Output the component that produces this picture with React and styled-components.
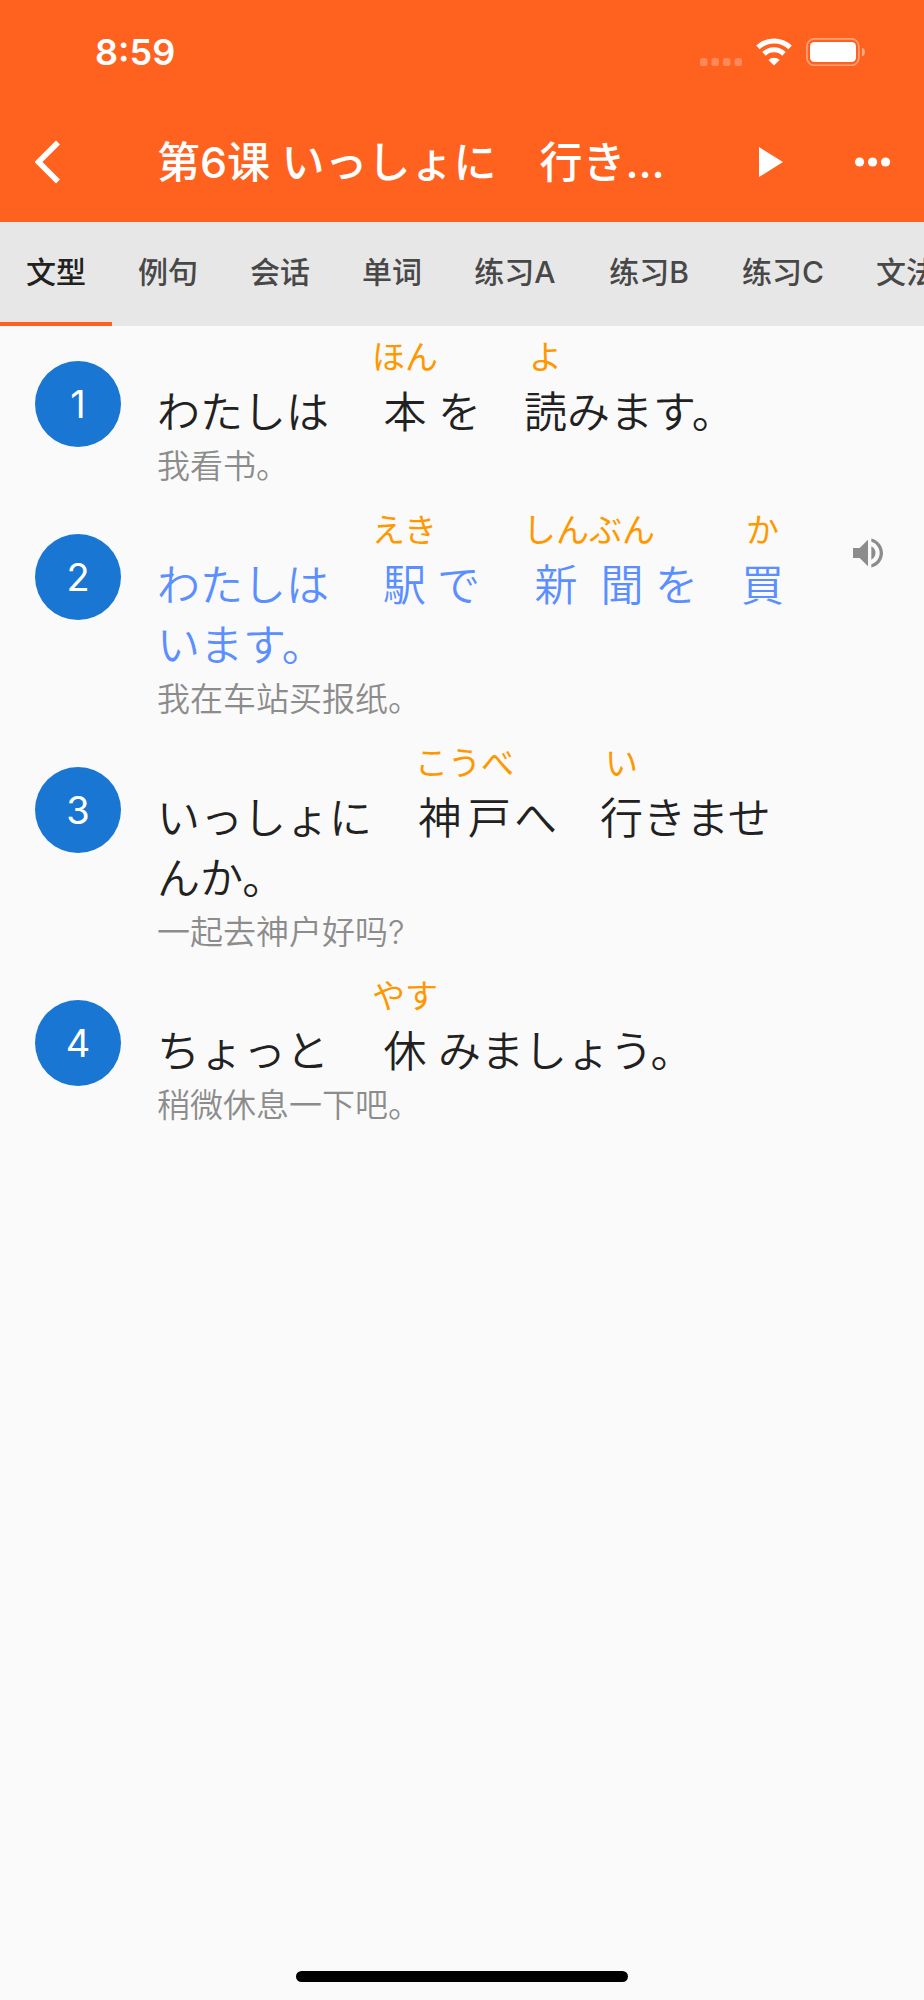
import { useState } from "react";
import styled, { createGlobalStyle } from "styled-components";
import { MdVolumeUp } from "react-icons/md";

const TABS = [
  { name: "文型" },
  { name: "例句" },
  { name: "会话" },
  { name: "单词" },
  { name: "练习A", wide: true },
  { name: "练习B", wide: true },
  { name: "练习C", wide: true },
  { name: "文法" },
];

// A part is plain text or a [kanji, reading] pair
const SENTENCES = [
  {
    id: 1,
    parts: ["わたしは　", ["本", "ほん"], "を　", ["読", "よ"], "みます。"],
    translation: "我看书。",
  },
  {
    id: 2,
    parts: [
      "わたしは　",
      ["駅", "えき"],
      "で　",
      ["新聞", "しんぶん"],
      "を　",
      ["買", "か"],
      "います。",
    ],
    translation: "我在车站买报纸。",
  },
  {
    id: 3,
    parts: [
      "いっしょに　",
      ["神戸", "こうべ"],
      "へ　",
      ["行", "い"],
      "きませんか。",
    ],
    translation: "一起去神户好吗?",
  },
  {
    id: 4,
    parts: ["ちょっと　", ["休", "やす"], "みましょう。"],
    translation: "稍微休息一下吧。",
  },
];

function StatusIcons() {
  return (
    <StatusGroup aria-hidden="true">
      <svg width="42" height="28" viewBox="0 0 42 28">
        <g fill="#fff" opacity="0.25">
          <rect x="0" y="20" width="7.4" height="8" rx="2.6" />
          <rect x="11.5" y="20" width="7.4" height="8" rx="2.6" />
          <rect x="23" y="20" width="7.4" height="8" rx="2.6" />
          <rect x="34.6" y="20" width="7.4" height="8" rx="2.6" />
        </g>
      </svg>
      <svg width="36" height="28" viewBox="0 0 36 28">
        <g fill="none" stroke="#fff" strokeWidth="5">
          <path d="M1.9 9.4a23.2 23.2 0 0 1 32.2 0" />
          <path d="M8 15.9a14.4 14.4 0 0 1 20 0" />
        </g>
        <path fill="#fff" d="M18 27.4l-5.6-5.5a8.2 8.2 0 0 1 11.2 0z" />
      </svg>
      <svg width="60" height="28" viewBox="0 0 60 28">
        <rect
          x="0.9"
          y="0.9"
          width="52"
          height="26.4"
          rx="7.5"
          fill="none"
          stroke="#fff"
          strokeWidth="1.7"
          opacity="0.4"
        />
        <rect x="4" y="4" width="46" height="20" rx="4.5" fill="#fff" />
        <path fill="#fff" opacity="0.45" d="M56 9.8c4 1.6 4 7.2 0 8.8z" />
      </svg>
    </StatusGroup>
  );
}

function Furigana({ kanji, reading }) {
  return (
    <Ruby>
      <Kanji>
        {[...kanji].map((char) => (
          <span key={char}>{char}</span>
        ))}
      </Kanji>
      <Reading>{reading}</Reading>
    </Ruby>
  );
}

function Sentence({ data, active, onSelect }) {
  return (
    <Row>
      <Badge
        type="button"
        aria-label={`第${data.id}句`}
        aria-pressed={active}
        onClick={onSelect}
      >
        {data.id}
      </Badge>
      <Body>
        <Japanese lang="ja" $active={active}>
          {data.parts.map((part, i) =>
            Array.isArray(part) ? (
              <Furigana key={i} kanji={part[0]} reading={part[1]} />
            ) : (
              part
            )
          )}
        </Japanese>
        <Translation>{data.translation}</Translation>
      </Body>
      <Side>
        {active && (
          <SoundButton type="button" aria-label="播放">
            <MdVolumeUp size={40} />
          </SoundButton>
        )}
      </Side>
    </Row>
  );
}

function App() {
  const [tab, setTab] = useState("文型");
  const [selected, setSelected] = useState(2);

  return (
    <Screen lang="zh-CN">
      <GlobalStyle />
      <Header>
        <StatusBar>
          <Clock>8:59</Clock>
          <StatusIcons />
        </StatusBar>
        <NavBar>
          <BackButton type="button" aria-label="返回">
            <svg width="26" height="44" viewBox="0 0 26 44">
              <path
                d="M23 2.5L3.5 22 23 41.5"
                fill="none"
                stroke="#fff"
                strokeWidth="5.6"
              />
            </svg>
          </BackButton>
          <Title>
            第6课 <span lang="ja">いっしょに　行きませんか</span>
          </Title>
          <NavButton type="button" aria-label="播放全部">
            <svg width="24" height="30" viewBox="0 0 24 30">
              <path d="M0 0l24 15L0 30z" fill="#fff" />
            </svg>
          </NavButton>
          <NavButton type="button" aria-label="更多">
            <svg width="36" height="10" viewBox="0 0 36 10">
              <g fill="#fff">
                <circle cx="4.6" cy="5" r="4.6" />
                <circle cx="17.6" cy="5" r="4.6" />
                <circle cx="30.6" cy="5" r="4.6" />
              </g>
            </svg>
          </NavButton>
        </NavBar>
      </Header>

      <TabBar role="tablist">
        {TABS.map(({ name, wide }) => (
          <Tab
            key={name}
            type="button"
            role="tab"
            aria-selected={name === tab}
            $active={name === tab}
            $wide={wide}
            onClick={() => setTab(name)}
          >
            {name}
          </Tab>
        ))}
      </TabBar>

      <List>
        {SENTENCES.map((s) => (
          <Sentence
            key={s.id}
            data={s}
            active={s.id === selected}
            onSelect={() => setSelected(s.id)}
          />
        ))}
      </List>

      <Footer>
        <HomeIndicator />
      </Footer>
    </Screen>
  );
}

const GlobalStyle = createGlobalStyle`
  * {
    box-sizing: border-box;
  }

  body {
    margin: 0;
    background-color: #fafafa;
    font-family: Inter, "Noto Sans CJK SC", sans-serif;
  }

  :lang(ja) {
    font-family: Inter, "Noto Sans CJK JP", sans-serif;
  }

  button {
    font-family: inherit;
    border: none;
    background: transparent;
    padding: 0;
    cursor: pointer;
  }

  svg {
    display: block;
  }
`;

const Screen = styled.div`
  min-height: 100vh;
  display: flex;
  flex-direction: column;
`;

const Header = styled.header`
  background-color: #ff621f;
  color: #fff;
`;

const StatusBar = styled.div`
  height: 104px;
  padding: 0 58px 0 95px;
  display: flex;
  align-items: center;
  justify-content: space-between;
`;

const Clock = styled.span`
  font-size: 36px;
  font-weight: 600;
  line-height: 44px;
`;

const StatusGroup = styled.div`
  display: flex;
  align-items: center;
  gap: 14px;
`;

const NavBar = styled.div`
  height: 118px;
  padding-bottom: 2px;
  display: flex;
  align-items: center;
`;

const NavButton = styled.button`
  width: 102px;
  height: 102px;
  display: flex;
  align-items: center;
  justify-content: center;
`;

const BackButton = styled(NavButton)`
  width: 121px;
  justify-content: flex-start;
  padding-left: 35px;
`;

const Title = styled.h1`
  flex: 1;
  min-width: 0;
  margin: 0 36px;
  font-size: 43px;
  font-weight: 500;
  line-height: 60px;
  white-space: nowrap;
  overflow: hidden;
  text-overflow: ellipsis;
`;

const TabBar = styled.div`
  display: flex;
  background-color: #e7e7e7;
  overflow: hidden;
`;

const Tab = styled.button`
  flex: none;
  width: ${({ $wide }) => ($wide ? "134px" : "112px")};
  height: 104px;
  font-size: 30px;
  font-weight: 500;
  line-height: 40px;
  color: ${({ $active }) => ($active ? "#212121" : "#484848")};
  border-bottom: 4px solid
    ${({ $active }) => ($active ? "#ff621f" : "transparent")};
`;

const List = styled.ol`
  flex: 1;
  margin: 0;
  padding: 0;
  list-style: none;
`;

const Row = styled.li`
  display: flex;
  align-items: flex-start;
  padding: 6px 0 9px 35px;
`;

const Badge = styled.button`
  flex: none;
  width: 86px;
  height: 86px;
  margin-top: 29px;
  border-radius: 50%;
  background-color: #1976d2;
  color: #fff;
  font-size: 38px;
  line-height: 86px;
`;

const Body = styled.div`
  flex: 1;
  min-width: 0;
  padding-left: 36px;
`;

const Japanese = styled.p`
  margin: 0;
  font-size: 43px;
  font-weight: 350;
  line-height: 60px;
  color: ${({ $active }) => ($active ? "#5b8fff" : "#212121")};
`;

const Ruby = styled.ruby`
  display: inline-flex;
  flex-direction: column-reverse;
  baseline-source: last;
`;

const Kanji = styled.span`
  display: flex;
  justify-content: space-around;
`;

const Reading = styled.rt`
  display: block;
  font-size: 33px;
  font-weight: 400;
  line-height: 50px;
  text-align: center;
  color: #ff9800;
`;

const Translation = styled.p`
  margin: 0;
  font-size: 33px;
  font-weight: 350;
  line-height: 48px;
  color: #8c8c8c;
`;

const Side = styled.div`
  flex: none;
  width: 112px;
  display: flex;
  justify-content: center;
  padding-top: 28px;
`;

const SoundButton = styled.button`
  color: #8c8c8c;
`;

const Footer = styled.footer`
  display: flex;
  justify-content: center;
  padding: 18px 0;
`;

const HomeIndicator = styled.div`
  width: 36%;
  height: 11px;
  border-radius: 6px;
  background-color: #000;
`;

export default App;
